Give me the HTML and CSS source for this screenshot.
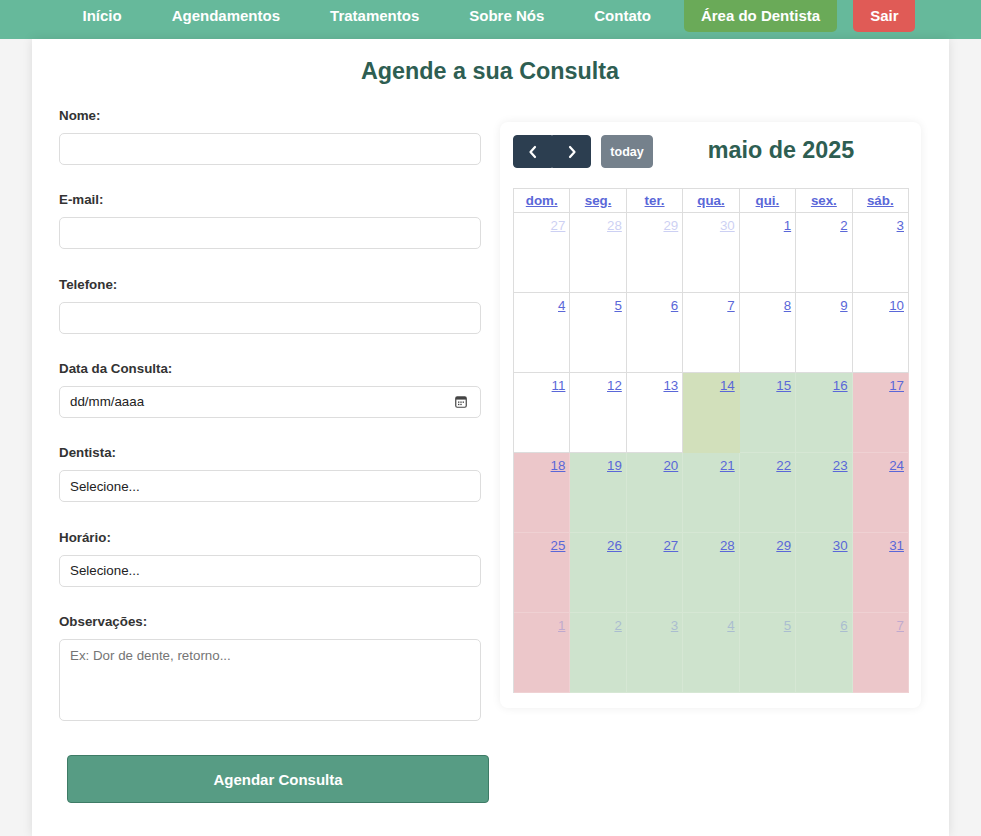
FILE: index.html
```html
<!DOCTYPE html>
<html lang="pt-BR">
<head>
<meta charset="utf-8">
<title>Agende a sua Consulta</title>
<link rel="stylesheet" href="styles.css">
</head>
<body>
<header class="topbar">
  <nav class="nav">
    <a class="nav-link" href="#">Início</a>
    <a class="nav-link" href="#">Agendamentos</a>
    <a class="nav-link" href="#">Tratamentos</a>
    <a class="nav-link" href="#">Sobre Nós</a>
    <a class="nav-link" href="#">Contato</a>
    <a class="nav-link nav-btn nav-btn-green" href="#">Área do Dentista</a>
    <a class="nav-link nav-btn nav-btn-red" href="#">Sair</a>
  </nav>
</header>
<main class="page">
  <h2 class="title">Agende a sua Consulta</h2>
  <div class="layout">
    <form class="form">
      <div class="group">
        <label class="label">Nome:</label>
        <input class="field" type="text">
      </div>
      <div class="group">
        <label class="label">E-mail:</label>
        <input class="field" type="text">
      </div>
      <div class="group">
        <label class="label">Telefone:</label>
        <input class="field" type="text">
      </div>
      <div class="group">
        <label class="label">Data da Consulta:</label>
        <div class="field field-date">
          <span>dd/mm/aaaa</span>
          <svg class="date-icon" width="12" height="12" viewBox="0 0 12 12" aria-hidden="true">
            <rect x="0.75" y="0.75" width="10.5" height="10.5" rx="1.5" fill="none" stroke="#444" stroke-width="1.2"/>
            <rect x="1" y="1" width="10" height="2.6" fill="#444"/>
            <rect x="3" y="5.5" width="1.4" height="1.3" fill="#444"/>
            <rect x="5.3" y="5.5" width="1.4" height="1.3" fill="#444"/>
            <rect x="7.6" y="5.5" width="1.4" height="1.3" fill="#444"/>
            <rect x="3" y="7.8" width="1.4" height="1.3" fill="#444"/>
            <rect x="5.3" y="7.8" width="1.4" height="1.3" fill="#444"/>
          </svg>
        </div>
      </div>
      <div class="group">
        <label class="label">Dentista:</label>
        <select class="field field-select"><option>Selecione...</option></select>
      </div>
      <div class="group">
        <label class="label">Horário:</label>
        <select class="field field-select"><option>Selecione...</option></select>
      </div>
      <div class="group">
        <label class="label">Observações:</label>
        <textarea class="field field-area" placeholder="Ex: Dor de dente, retorno..."></textarea>
      </div>
      <button class="submit" type="button">Agendar Consulta</button>
    </form>

    <section class="cal-card">
      <div class="toolbar">
        <div class="chunk">
          <div class="btn-group">
            <button class="fc-btn" type="button" aria-label="prev">
              <svg width="10" height="14" viewBox="0 0 10 14"><polyline points="7,2 2.5,7 7,12" fill="none" stroke="#fff" stroke-width="2.2" stroke-linecap="round" stroke-linejoin="round"/></svg>
            </button>
            <button class="fc-btn" type="button" aria-label="next">
              <svg width="10" height="14" viewBox="0 0 10 14"><polyline points="3,2 7.5,7 3,12" fill="none" stroke="#fff" stroke-width="2.2" stroke-linecap="round" stroke-linejoin="round"/></svg>
            </button>
          </div>
          <button class="today-btn" type="button">today</button>
        </div>
        <h3 class="cal-title">maio de 2025</h3>
        <div class="chunk"></div>
      </div>

      <div class="cal-grid">
        <div class="hcell"><a href="#">dom.</a></div>
        <div class="hcell"><a href="#">seg.</a></div>
        <div class="hcell"><a href="#">ter.</a></div>
        <div class="hcell"><a href="#">qua.</a></div>
        <div class="hcell"><a href="#">qui.</a></div>
        <div class="hcell"><a href="#">sex.</a></div>
        <div class="hcell"><a href="#">sáb.</a></div>

        <div class="day other"><a href="#">27</a></div>
        <div class="day other"><a href="#">28</a></div>
        <div class="day other"><a href="#">29</a></div>
        <div class="day other"><a href="#">30</a></div>
        <div class="day"><a href="#">1</a></div>
        <div class="day"><a href="#">2</a></div>
        <div class="day"><a href="#">3</a></div>

        <div class="day"><a href="#">4</a></div>
        <div class="day"><a href="#">5</a></div>
        <div class="day"><a href="#">6</a></div>
        <div class="day"><a href="#">7</a></div>
        <div class="day"><a href="#">8</a></div>
        <div class="day"><a href="#">9</a></div>
        <div class="day"><a href="#">10</a></div>

        <div class="day"><a href="#">11</a></div>
        <div class="day"><a href="#">12</a></div>
        <div class="day"><a href="#">13</a></div>
        <div class="day today"><a href="#">14</a></div>
        <div class="day avail"><a href="#">15</a></div>
        <div class="day avail"><a href="#">16</a></div>
        <div class="day closed"><a href="#">17</a></div>

        <div class="day closed"><a href="#">18</a></div>
        <div class="day avail"><a href="#">19</a></div>
        <div class="day avail"><a href="#">20</a></div>
        <div class="day avail"><a href="#">21</a></div>
        <div class="day avail"><a href="#">22</a></div>
        <div class="day avail"><a href="#">23</a></div>
        <div class="day closed"><a href="#">24</a></div>

        <div class="day closed"><a href="#">25</a></div>
        <div class="day avail"><a href="#">26</a></div>
        <div class="day avail"><a href="#">27</a></div>
        <div class="day avail"><a href="#">28</a></div>
        <div class="day avail"><a href="#">29</a></div>
        <div class="day avail"><a href="#">30</a></div>
        <div class="day closed"><a href="#">31</a></div>

        <div class="day closed other"><a href="#">1</a></div>
        <div class="day avail other"><a href="#">2</a></div>
        <div class="day avail other"><a href="#">3</a></div>
        <div class="day avail other"><a href="#">4</a></div>
        <div class="day avail other"><a href="#">5</a></div>
        <div class="day avail other"><a href="#">6</a></div>
        <div class="day closed other"><a href="#">7</a></div>
      </div>
    </section>
  </div>
</main>
</body>
</html>
```

FILE: styles.css
```css
* { box-sizing: border-box; }

body {
  margin: 0;
  background: #f4f4f4;
  font-family: "Liberation Sans", Arial, sans-serif;
  color: #333;
}

/* top navigation */
.topbar {
  height: 39px;
  background: #66b99b;
  display: flex;
  justify-content: center;
  align-items: flex-start;
}
.nav {
  display: flex;
  gap: 16px;
}
.nav-link {
  display: block;
  padding: 7px 17px 8px;
  font-size: 15px;
  line-height: 17px;
  font-weight: bold;
  color: #fff;
  text-decoration: none;
}
.nav-btn { border-radius: 0 0 5px 5px; }
.nav-btn-green { background: #6aaa58; }
.nav-btn-red { background: #e05b56; }

/* page container */
.page {
  width: 917px;
  margin: 0 auto;
  min-height: calc(100vh - 39px);
  background: #fff;
  box-shadow: 0 0 10px rgba(0, 0, 0, 0.1);
  padding: 18px 28px 30px 27px;
}
.title {
  margin: 0 0 23px;
  text-align: center;
  font-size: 23.33px;
  line-height: 28px;
  font-weight: bold;
  color: #2e5e52;
}
.layout {
  display: grid;
  grid-template-columns: 422px 421px;
  gap: 19px;
  align-items: start;
}

/* form */
.group { margin-bottom: 27.33px; }
.label {
  display: block;
  font-size: 13.33px;
  line-height: 16px;
  font-weight: bold;
  color: #333;
  margin-bottom: 9px;
}
.field {
  display: block;
  width: 100%;
  height: 32px;
  border: 1px solid #ddd;
  border-radius: 5px;
  background: #fff;
  padding: 0 10px;
  font-family: "Liberation Sans", Arial, sans-serif;
  font-size: 13.33px;
  color: #222;
  outline: none;
}
.field-date {
  display: flex;
  align-items: center;
  justify-content: space-between;
  padding-right: 13px;
}
.date-icon { display: block; }
.field-select {
  appearance: none;
  -webkit-appearance: none;
}
.field-area {
  height: 82px;
  padding: 8px 10px;
  resize: none;
  line-height: 15px;
}
.field-area::placeholder { color: #757575; }
.group:last-of-type { margin-bottom: 0; }

.submit {
  display: block;
  width: 100%;
  height: 48px;
  margin: 34.5px 0 0 8px;
  background: #579c84;
  border: 1px solid #3e7b66;
  border-radius: 4px;
  color: #fff;
  font-family: "Liberation Sans", Arial, sans-serif;
  font-size: 15px;
  font-weight: bold;
}

/* calendar */
.cal-card {
  margin-top: 14px;
  background: #fff;
  border-radius: 8px;
  box-shadow: 0 0 10px rgba(0, 0, 0, 0.07);
  padding: 13px 12px 15px 13px;
}
.toolbar {
  display: flex;
  justify-content: space-between;
  align-items: flex-start;
  margin-bottom: 20px;
}
.chunk {
  display: flex;
  align-items: center;
}
.btn-group { display: flex; }
.fc-btn {
  width: 39px;
  height: 33px;
  background: #2c3e50;
  border: 1px solid #2c3e50;
  padding: 0;
  display: flex;
  align-items: center;
  justify-content: center;
}
.fc-btn:first-child { border-radius: 4px 0 0 4px; }
.fc-btn:last-child { border-radius: 0 4px 4px 0; }
.today-btn {
  margin-left: 10px;
  width: 52px;
  height: 33px;
  background: #2c3e50;
  border: 1px solid #2c3e50;
  border-radius: 4px;
  opacity: 0.65;
  color: #fff;
  font-family: "Liberation Sans", Arial, sans-serif;
  font-size: 12.5px;
  font-weight: bold;
  padding: 0;
}
.cal-title {
  margin: 0;
  padding-top: 1px;
  font-size: 23.33px;
  line-height: 28px;
  font-weight: bold;
  color: #2e5e52;
}

.cal-grid {
  display: grid;
  grid-template-columns: repeat(7, 1fr);
  grid-template-rows: 24px;
  grid-auto-rows: 80px;
  border-top: 1px solid #ddd;
  border-left: 1px solid #ddd;
  width: 396px;
}
.hcell {
  border-right: 1px solid #ddd;
  border-bottom: 1px solid #ddd;
  display: flex;
  align-items: center;
  justify-content: center;
}
.hcell a {
  font-size: 13.33px;
  line-height: 16px;
  font-weight: bold;
  color: #5a67d8;
  text-decoration: underline;
}
.day {
  border-right: 1px solid #ddd;
  border-bottom: 1px solid #ddd;
  display: flex;
  justify-content: flex-end;
  align-items: flex-start;
}
.day a {
  padding: 4px;
  font-size: 13.33px;
  line-height: 18px;
  color: #5a67d8;
  text-decoration: underline;
}
.day.other a { opacity: 0.3; }
.day.avail {
  background: #cee3cd;
  border-color: #d6e7d4;
}
.day.closed {
  background: #ecc7ca;
  border-color: #efd1d3;
}
.day.today {
  background: #d2e0bb;
  border-color: #d2e0bb;
}
```
